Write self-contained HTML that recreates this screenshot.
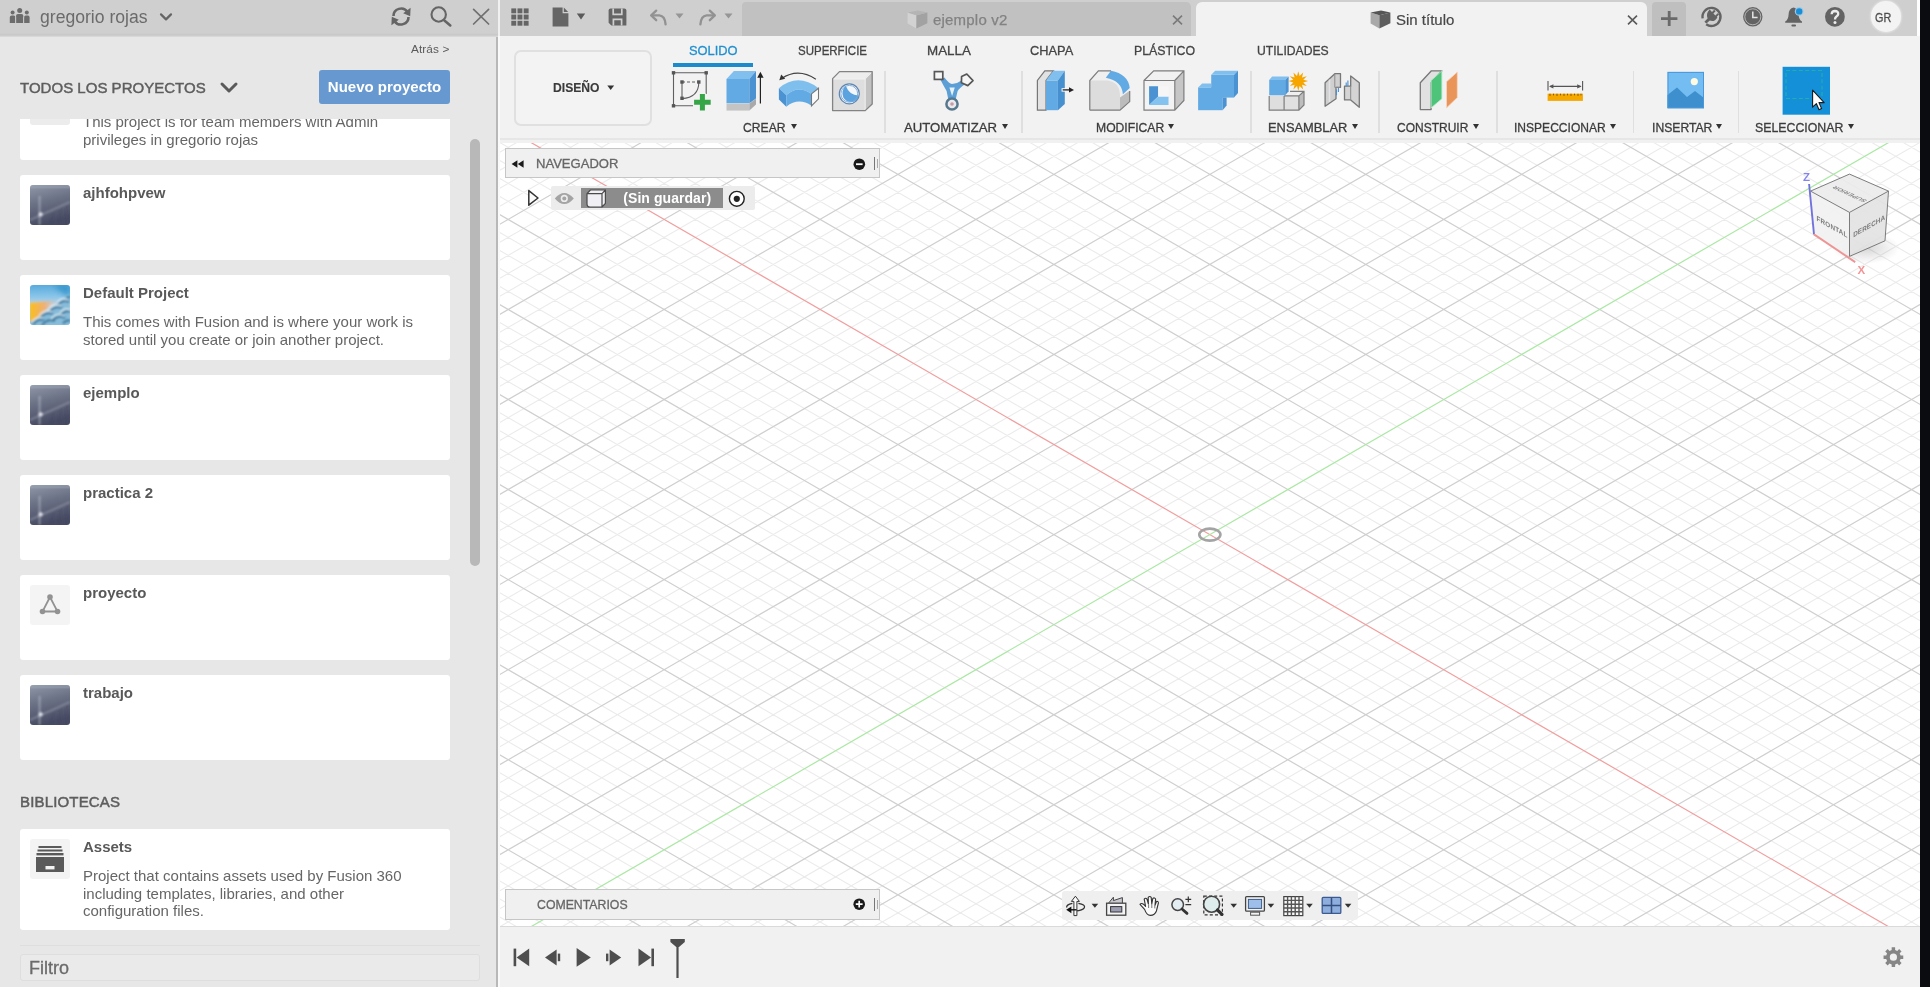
<!DOCTYPE html>
<html lang="es">
<head>
<meta charset="utf-8">
<title>Autodesk Fusion</title>
<style>
*{box-sizing:border-box;margin:0;padding:0}
html,body{width:1930px;height:987px;overflow:hidden;background:#fafafa;font-family:"Liberation Sans",sans-serif;color:#555}
.abs{position:absolute}
#left{will-change:transform;position:absolute;left:0;top:0;width:497.5px;height:987px;background:#e7e7e7;overflow:hidden}
#lhead{position:absolute;left:0;top:0;width:497.5px;height:37px;background:#cfcfcf}
#lsplit{position:absolute;left:496.2px;top:37px;width:1.5px;height:950px;background:#b8b8b8}
#lsplit2{position:absolute;left:497.5px;top:0;width:2.5px;height:36px;background:#f0f0f0}
.card{position:absolute;left:20px;width:430px;background:#fff;border-radius:3px}
.card .th{position:absolute;left:10px;top:10px;width:40px;height:40px;border-radius:3px;overflow:hidden}
.card .tt{position:absolute;left:63px;top:9px;font-size:15px;font-weight:bold;color:#595959;white-space:nowrap;line-height:18px}
.card .ds{position:absolute;left:63px;top:38px;font-size:15px;color:#666;line-height:17.6px;white-space:nowrap}
#main{will-change:transform;position:absolute;left:500px;top:0;width:1420px;height:987px;background:#fdfdfd}
#topbar{position:absolute;left:0;top:0;width:1417px;height:36.4px;background:#cfcfcf}
#toolbar{position:absolute;left:0;top:36px;width:1419.7px;height:103px;background:#f2f2f2}
#viewport{position:absolute;left:0;top:139px;width:1419.7px;height:787.6px;background:#fff;overflow:hidden}
#timeline{position:absolute;left:0;top:926.4px;width:1419.7px;height:61px;background:#f1f1f1;border-top:1.2px solid #dadada}
#black{position:absolute;left:1920px;top:0;width:10px;height:987px;background:#0b0c10}
.tab{position:absolute;top:9px;font-size:13px;color:#444;white-space:nowrap;line-height:15px}
.glab{position:absolute;top:84px;font-size:13px;color:#3c3c3c;white-space:nowrap;line-height:15px}
.garr{position:absolute;top:88px;width:0;height:0;border-left:3.5px solid transparent;border-right:3.5px solid transparent;border-top:5px solid #333}
.sep{position:absolute;top:35px;width:1.6px;height:62px;background:#dfdfdf}
.ico{position:absolute;overflow:visible}
</style>
</head>
<body>
<svg width="0" height="0" style="position:absolute">
<defs>
<linearGradient id="gDark" x1="0" y1="0" x2="0.25" y2="1"><stop offset="0" stop-color="#8f98a8"/><stop offset="0.45" stop-color="#6d7387"/><stop offset="1" stop-color="#474b63"/></linearGradient>
<linearGradient id="gSky" x1="0" y1="0" x2="0" y2="1"><stop offset="0" stop-color="#58abdc"/><stop offset="0.3" stop-color="#8cc6ea"/><stop offset="0.5" stop-color="#c9d3da"/><stop offset="1" stop-color="#8fc4e0"/></linearGradient>
<linearGradient id="gOr" x1="0" y1="0" x2="1" y2="0"><stop offset="0" stop-color="#fdbf18"/><stop offset="0.55" stop-color="#f9a85a" stop-opacity="0.8"/><stop offset="1" stop-color="#f0b090" stop-opacity="0"/></linearGradient>
<symbol id="thDark" viewBox="0 0 40 40">
<rect width="40" height="40" fill="url(#gDark)"/>
<rect width="40" height="3.4" fill="#aab2c0" opacity=".3"/>
<g filter="url(#bl)">
<path d="M9.6 11V40" stroke="#d4d9e4" stroke-width="1.6" opacity=".5"/>
<path d="M0 35L40 17" stroke="#b8bdcc" stroke-width="1.6" opacity=".45"/>
<circle cx="10.6" cy="29.4" r="2.1" fill="#eef1f7" opacity=".9"/>
<path d="M21 40L23 26M29 40L31 22M36 40L37 19" stroke="#3a3e58" stroke-width="1.2" opacity=".4"/>
</g>
</symbol>
<symbol id="thDef" viewBox="0 0 40 40">
<rect width="40" height="40" fill="url(#gSky)"/>
<path d="M24 0H40V12Q30 8 24 0Z" fill="#1683bd" opacity=".55" filter="url(#bl2)"/>
<g filter="url(#bl)">
<path d="M0 18L26 15.6L9 32L0 37Z" fill="url(#gOr)"/>
<path d="M0 38L10 31.6L20 24.6L30 15.6L36 11L40 10V40H0Z" fill="#86bcd9"/>
<path d="M3 39.4Q8 33 14 35M12 40Q18 33 25 36M10 33Q16 26 23 29M22 36Q28 29 35 33M19 27Q25 20 32 23M31 30Q36 24 40 27M28 20Q33 13.6 39 17M33 38.6Q37 34 40 36M36 13.6Q38.6 11.6 40 12.6" stroke="#2a6a92" stroke-width="2.3" fill="none" opacity=".85"/>
<path d="M2 37.4Q7 31 13 33M9 31Q15 24 22 27M21 34Q27 27 34 31M18 25Q24 18 31 21M30 28Q35 22 40 25M27 18Q32 11.6 38 15" stroke="#e6f3fb" stroke-width="1.5" fill="none" opacity=".9"/>
</g>
</symbol>
<filter id="bl2" x="-30%" y="-30%" width="160%" height="160%"><feGaussianBlur stdDeviation="2.5"/></filter>
<filter id="bl" x="-10%" y="-10%" width="120%" height="120%"><feGaussianBlur stdDeviation=".8"/></filter>
</defs>
</svg>
<div id="left">
 <div id="lhead" style="background:linear-gradient(#cfcfcf 0,#cfcfcf 33px,#c8c8c8 35px,#d6d6d6 36.4px,#e4e4e4 37px)"></div>
 <!-- people icon -->
 <svg class="ico" style="left:9px;top:7px" width="22" height="17" viewBox="0 0 22 17">
  <g fill="#6c6c6c"><circle cx="3.6" cy="5.6" r="2"/><path d="M.8 16V10.4Q.8 8.6 2.6 8.6H4.8Q6.4 8.6 6.4 10.4V16Z"/>
  <circle cx="17.8" cy="5.6" r="2"/><path d="M15 16V10.4Q15 8.6 16.8 8.6H19Q20.6 8.6 20.6 10.4V16Z"/>
  <circle cx="10.7" cy="3.4" r="2.5"/><path d="M7 16V9Q7 7 9 7H12.4Q14.4 7 14.4 9V16Z"/></g>
  <path d="M6.7 16V9.5M14.7 16V9.5" stroke="#cfcfcf" stroke-width=".9"/>
 </svg>
 <div class="abs" style="left:40px;top:6.5px;font-size:17.6px;line-height:20px;color:#6b6b6b;white-space:nowrap">gregorio rojas</div>
 <svg class="ico" style="left:159px;top:12px" width="14" height="10" viewBox="0 0 14 10"><path d="M2 2.4L7 7.4L12 2.4" fill="none" stroke="#656565" stroke-width="2.2" stroke-linecap="round" stroke-linejoin="round"/></svg>
 <!-- refresh -->
 <svg class="ico" style="left:390px;top:6px" width="22" height="21" viewBox="0 0 22 21">
  <g fill="none" stroke="#656565" stroke-width="2.6"><path d="M3.5 10A7.6 7.4 0 0 1 17.4 5.8"/><path d="M18.5 11A7.6 7.4 0 0 1 4.6 15.2"/></g>
  <path d="M20.6 1.8L20.2 10.2L13.2 7.2Z" fill="#656565"/><path d="M1.4 19.2L1.8 10.8L8.8 13.8Z" fill="#656565"/>
 </svg>
 <!-- search -->
 <svg class="ico" style="left:429px;top:5px" width="24" height="23" viewBox="0 0 24 23"><circle cx="9.7" cy="9.5" r="7.2" fill="none" stroke="#656565" stroke-width="2.1"/><path d="M15.4 15.6L21.3 20.4" stroke="#656565" stroke-width="2.6" stroke-linecap="round"/></svg>
 <!-- close -->
 <svg class="ico" style="left:472px;top:8px" width="18" height="18" viewBox="0 0 18 18"><path d="M1.6 1.4L16.6 16M16.6 1.4L1.6 16" stroke="#707070" stroke-width="1.7" stroke-linecap="round"/></svg>

 <div class="abs" style="left:411px;top:42px;font-size:11.8px;line-height:14px;color:#5a5a5a;white-space:nowrap;letter-spacing:.1px">Atrás &gt;</div>
 <div class="abs" style="left:20px;top:78.8px;font-size:15px;line-height:18px;color:#5e5e5e;-webkit-text-stroke:.45px #5e5e5e;letter-spacing:.02px;white-space:nowrap">TODOS LOS PROYECTOS</div>
 <svg class="ico" style="left:219px;top:81px" width="20" height="14" viewBox="0 0 20 14"><path d="M3 3L10 10L17 3" fill="none" stroke="#5a5a5a" stroke-width="3" stroke-linecap="round" stroke-linejoin="round"/></svg>
 <div class="abs" style="left:319px;top:69.7px;width:131px;height:34.6px;border-radius:3px;background:#6798cf;color:#fff;font-size:15px;font-weight:bold;text-align:center;line-height:34px;white-space:nowrap">Nuevo proyecto</div>

 <!-- clipped list area -->
 <div class="abs" style="left:0;top:119px;width:496px;height:660px;overflow:hidden">
  <div class="card" style="top:-44px;height:85px"><div class="th" style="background:#ececec"></div><div class="ds">This project is for team members with Admin<br>privileges in gregorio rojas</div></div>
  <div class="card" style="top:56px;height:85px"><svg class="th" viewBox="0 0 40 40"><use href="#thDark"/></svg><div class="tt">ajhfohpvew</div></div>
  <div class="card" style="top:156px;height:85px"><svg class="th" viewBox="0 0 40 40"><use href="#thDef"/></svg><div class="tt">Default Project</div><div class="ds">This comes with Fusion and is where your work is<br>stored until you create or join another project.</div></div>
  <div class="card" style="top:256px;height:85px"><svg class="th" viewBox="0 0 40 40"><use href="#thDark"/></svg><div class="tt">ejemplo</div></div>
  <div class="card" style="top:356px;height:85px"><svg class="th" viewBox="0 0 40 40"><use href="#thDark"/></svg><div class="tt">practica 2</div></div>
  <div class="card" style="top:456px;height:85px"><div class="th" style="background:#f4f4f4"><svg width="40" height="40" viewBox="0 0 40 40"><path d="M20 12L12.5 26.5H27.5Z" fill="none" stroke="#929292" stroke-width="1.8"/><circle cx="20" cy="12" r="2.8" fill="#929292"/><circle cx="12.5" cy="26.5" r="2.8" fill="#929292"/><circle cx="27.5" cy="26.5" r="2.8" fill="#929292"/></svg></div><div class="tt">proyecto</div></div>
  <div class="card" style="top:556px;height:85px"><svg class="th" viewBox="0 0 40 40"><use href="#thDark"/></svg><div class="tt">trabajo</div></div>
 </div>
 <!-- scrollbar -->
 <div class="abs" style="left:470px;top:139px;width:10px;height:427px;border-radius:5px;background:#b8b8b8"></div>

 <div class="abs" style="left:20px;top:793px;font-size:15px;line-height:18px;color:#5e5e5e;-webkit-text-stroke:.5px #5e5e5e;letter-spacing:.16px;white-space:nowrap">BIBLIOTECAS</div>
 <div class="card" style="top:829px;height:101px">
  <div class="th" style="background:#f3f3f3"><svg width="40" height="40" viewBox="0 0 40 40"><g fill="#5a5a5a"><rect x="8.5" y="7" width="23" height="2"/><rect x="7.5" y="10.5" width="25" height="2"/><rect x="6.5" y="14" width="27" height="2.4"/><path d="M6 18H34V33H6Z"/></g><rect x="15.5" y="27" width="9" height="3.4" fill="#f3f3f3"/></svg></div>
  <div class="tt">Assets</div>
  <div class="ds">Project that contains assets used by Fusion 360<br>including templates, libraries, and other<br>configuration files.</div>
 </div>
 <div class="abs" style="left:20px;top:945px;width:460px;height:1px;background:#dedede"></div>
 <div class="abs" style="left:20px;top:954px;width:460px;height:27px;border:1px solid #dedede;border-radius:3px;background:#eaeaea"></div>
 <div class="abs" style="left:29px;top:957.8px;font-size:18px;line-height:21px;color:#6a6a6a;-webkit-text-stroke:.3px #6a6a6a;white-space:nowrap">Filtro</div>
</div>
<div id="lsplit"></div><div id="lsplit2"></div>
<div id="main">
<div id="topbar">
 <!-- grid 3x3 -->
 <svg class="ico" style="left:11px;top:8px" width="18" height="18" viewBox="0 0 18 18"><g fill="#656565"><rect x=".3" y=".4" width="4.9" height="4.9"/><rect x="6.5" y=".4" width="4.9" height="4.9"/><rect x="12.7" y=".4" width="4.9" height="4.9"/><rect x=".3" y="6.6" width="4.9" height="4.9"/><rect x="6.5" y="6.6" width="4.9" height="4.9"/><rect x="12.7" y="6.6" width="4.9" height="4.9"/><rect x=".3" y="12.8" width="4.9" height="4.9"/><rect x="6.5" y="12.8" width="4.9" height="4.9"/><rect x="12.7" y="12.8" width="4.9" height="4.9"/></g></svg>
 <!-- file -->
 <svg class="ico" style="left:52px;top:7px" width="17" height="20" viewBox="0 0 17 20"><path d="M.6.4H10.6V6.2H16.4V19.6H.6Z" fill="#656565"/><path d="M11.8.6L16.2 5H11.8Z" fill="#656565"/></svg>
 <svg class="ico" style="left:76px;top:13px" width="10" height="7" viewBox="0 0 10 7"><path d="M.8.6H9.2L5 6.4Z" fill="#5a5a5a"/></svg>
 <!-- save -->
 <svg class="ico" style="left:108px;top:8px" width="19" height="18" viewBox="0 0 19 18"><path d="M2.6.4H16.4Q18.4.4 18.4 2.4V17.6H3.4L.6 14.8V2.4Q.6.4 2.6.4Z" fill="#656565"/><path d="M5.2.4V6.4H13.8V.4" fill="none" stroke="#cfcfcf" stroke-width="1.7"/><rect x="9.6" y="1.2" width="2.6" height="3.6" fill="#656565"/><path d="M5.4 17.6V11.4H13.6V17.6" fill="none" stroke="#cfcfcf" stroke-width="1.7"/></svg>
 <!-- undo -->
 <svg class="ico" style="left:149px;top:9px" width="19" height="17" viewBox="0 0 19 17"><path d="M7.2 1.6L2.2 6.4L7.2 11.2" fill="none" stroke="#929292" stroke-width="2.3" stroke-linecap="round" stroke-linejoin="round"/><path d="M2.8 6.4H10.4Q16 7 16.6 15.4" fill="none" stroke="#929292" stroke-width="2.3" stroke-linecap="round"/></svg>
 <svg class="ico" style="left:175px;top:13px" width="9" height="6" viewBox="0 0 9 6"><path d="M.5.4H8.5L4.5 5.6Z" fill="#969696"/></svg>
 <!-- redo -->
 <svg class="ico" style="left:198px;top:9px" width="19" height="17" viewBox="0 0 19 17"><path d="M11.8 1.6L16.8 6.4L11.8 11.2" fill="none" stroke="#929292" stroke-width="2.3" stroke-linecap="round" stroke-linejoin="round"/><path d="M16.2 6.4H8.6Q3 7 2.4 15.4" fill="none" stroke="#929292" stroke-width="2.3" stroke-linecap="round"/></svg>
 <svg class="ico" style="left:224px;top:13px" width="9" height="6" viewBox="0 0 9 6"><path d="M.5.4H8.5L4.5 5.6Z" fill="#969696"/></svg>

 <!-- tab 1 -->
 <div class="abs" style="left:242px;top:2px;width:449px;height:34px;background:#c1c1c1;border-radius:4px 5px 0 0"></div>
 <svg class="ico" style="left:407px;top:10px" width="21" height="19" viewBox="0 0 21 19"><path d="M.6 2.6L9.4 5.2V18.4L.6 13.6Z" fill="#d2d2d2"/><path d="M9.4 5.2L20.4 2.4V13.2L9.4 18.4Z" fill="#a2a2a2"/><path d="M.6 2.6L11 .5L20.4 2.4L9.4 5.2Z" fill="#b4b4b4"/></svg>
 <div class="abs" style="left:433px;top:11.4px;font-size:15px;line-height:18px;color:#828282;-webkit-text-stroke:.25px #828282;white-space:nowrap;letter-spacing:.2px">ejemplo v2</div>
 <svg class="ico" style="left:672px;top:15px" width="11" height="10" viewBox="0 0 11 10"><path d="M1 .6L10 9.4M10 .6L1 9.4" stroke="#7a7a7a" stroke-width="1.6"/></svg>
 <!-- tab 2 active -->
 <div class="abs" style="left:696px;top:2px;width:451px;height:35px;background:#f2f2f2;border-radius:6px 6px 0 0"></div>
 <svg class="ico" style="left:870px;top:10px" width="21" height="19" viewBox="0 0 21 19"><path d="M.6 2.6L9.4 5.2V18.4L.6 13.6Z" fill="#a9a9a9"/><path d="M9.4 5.2L20.4 2.4V13.2L9.4 18.4Z" fill="#5e5e5e"/><path d="M.6 2.6L11 .5L20.4 2.4L9.4 5.2Z" fill="#555"/></svg>
 <div class="abs" style="left:896px;top:11.4px;font-size:15px;line-height:18px;color:#484848;-webkit-text-stroke:.2px #484848;white-space:nowrap">Sin título</div>
 <svg class="ico" style="left:1127px;top:15px" width="11" height="10" viewBox="0 0 11 10"><path d="M1 .6L10 9.4M10 .6L1 9.4" stroke="#5a5a5a" stroke-width="1.6"/></svg>
 <!-- plus -->
 <div class="abs" style="left:1151.5px;top:2px;width:34.5px;height:34px;background:#bfbfbf;border-radius:4px 4px 0 0"></div>
 <svg class="ico" style="left:1160px;top:10px" width="18" height="17" viewBox="0 0 18 17"><path d="M9.2 1V16M1 8.6H17.4" stroke="#6a6a6a" stroke-width="2.8"/></svg>
 <!-- extensions -->
 <svg class="ico" style="left:1200px;top:5.2px" width="22" height="22" viewBox="0 0 22 22"><path d="M6.2 19.2A9 9 0 1 0 2.6 13.4" fill="none" stroke="#636363" stroke-width="2.4"/><path d="M9.6 4.6L12 7L14.2 4.8L15.6 6.2L13.4 8.4L15.4 10.4L17.6 8.2L19 9.6L16.8 11.8L17.4 12.4Q14.6 17.2 9.8 15.6L6.4 18.6L4.4 16.8L7.6 13.6Q5.6 9 9.6 4.6Z" fill="#636363"/></svg>
 <!-- clock -->
 <svg class="ico" style="left:1242px;top:6px" width="22" height="22" viewBox="0 0 22 22"><circle cx="10.8" cy="10.8" r="9.7" fill="#636363"/><circle cx="10.8" cy="10.8" r="8" fill="none" stroke="#bdbdbd" stroke-width=".9"/><path d="M10.8 5.4V11.4H15.6" fill="none" stroke="#e4e4e4" stroke-width="1.5"/></svg>
 <!-- bell -->
 <svg class="ico" style="left:1284px;top:5px" width="22" height="23" viewBox="0 0 22 23"><path d="M9.6 2.4Q14.4 3.4 14.6 9.4Q14.8 14.4 18 16.6V17.8H1.2V16.6Q4.4 14.4 4.6 9.4Q4.8 3.4 9.6 2.4Z" fill="#636363"/><rect x="7.4" y="19.6" width="4.6" height="1.8" rx=".9" fill="#636363"/><circle cx="15.2" cy="6.4" r="4.4" fill="#9cc9e6"/><circle cx="15.2" cy="6.4" r="3.2" fill="#1b8fd6"/></svg>
 <!-- help -->
 <svg class="ico" style="left:1324px;top:6px" width="22" height="22" viewBox="0 0 22 22"><circle cx="10.9" cy="10.8" r="9.9" fill="#636363"/><path d="M7.6 8.2Q7.8 5 11 5Q14.4 5.2 14.2 8Q14 9.8 12.2 10.8Q11 11.6 11 13.4" fill="none" stroke="#ececec" stroke-width="2.3"/><circle cx="11" cy="16.6" r="1.5" fill="#ececec"/></svg>
 <!-- avatar -->
 <div class="abs" style="left:1371px;top:1.3px;width:30.4px;height:30.4px;border-radius:50%;background:#f3f3f3;box-shadow:0 0 2px 1px rgba(240,240,240,.55)"></div>
 <span class="abs" style="left:1375.3px;top:10.1px;font-size:13px;line-height:15px;font-weight:400;color:#4c4c4c;white-space:nowrap;-webkit-text-stroke:.3px #4c4c4c;transform-origin:0 0;transform:scaleX(0.8308)">GR</span>
</div>
<div id="toolbar">
 <div class="abs" style="left:0;top:101.8px;width:1420px;height:1.2px;background:#e6e6e6"></div>
 
 <!-- DISEÑO button -->
 <div class="abs" style="left:13.9px;top:13.8px;width:138px;height:76px;border:2px solid #e0e0e0;border-radius:7px;background:#f3f3f3"></div>
 <span class="abs" style="left:53.2px;top:44.2px;font-size:13px;line-height:15px;font-weight:700;color:#3a3a3a;white-space:nowrap;-webkit-text-stroke:.15px #3a3a3a;transform-origin:0 0;transform:scaleX(0.9329)">DISEÑO</span>
 <svg class="ico" style="left:106.5px;top:48.8px" width="8" height="6" viewBox="0 0 8 6"><path d="M.3.4H7.1L3.7 5Z" fill="#333"/></svg>
 <!-- tabs -->
 <span class="abs" style="left:189px;top:7.3px;font-size:13px;line-height:15px;font-weight:400;color:#1f8fd0;white-space:nowrap;-webkit-text-stroke:.3px #1f8fd0;transform-origin:0 0;transform:scaleX(0.9893)">SOLIDO</span>
 <span class="abs" style="left:297.8px;top:7.3px;font-size:13px;line-height:15px;font-weight:400;color:#444;white-space:nowrap;-webkit-text-stroke:.3px #444;transform-origin:0 0;transform:scaleX(0.8845)">SUPERFICIE</span>
 <span class="abs" style="left:426.6px;top:7.3px;font-size:13px;line-height:15px;font-weight:400;color:#444;white-space:nowrap;-webkit-text-stroke:.3px #444;transform-origin:0 0;transform:scaleX(1.0298)">MALLA</span>
 <span class="abs" style="left:530.3px;top:7.3px;font-size:13px;line-height:15px;font-weight:400;color:#444;white-space:nowrap;-webkit-text-stroke:.3px #444;transform-origin:0 0;transform:scaleX(0.9857)">CHAPA</span>
 <span class="abs" style="left:634.2px;top:7.3px;font-size:13px;line-height:15px;font-weight:400;color:#444;white-space:nowrap;-webkit-text-stroke:.3px #444;transform-origin:0 0;transform:scaleX(0.9503)">PLÁSTICO</span>
 <span class="abs" style="left:756.6px;top:7.3px;font-size:13px;line-height:15px;font-weight:400;color:#444;white-space:nowrap;-webkit-text-stroke:.3px #444;transform-origin:0 0;transform:scaleX(0.9364)">UTILIDADES</span>
 <div class="abs" style="left:172.7px;top:27.2px;width:80.2px;height:4px;background:#1b8bcb"></div>
 <!-- group labels -->
 <span class="abs" style="left:243.3px;top:83.5px;font-size:13px;line-height:15px;font-weight:400;color:#3c3c3c;white-space:nowrap;-webkit-text-stroke:.3px #3c3c3c;transform-origin:0 0;transform:scaleX(0.9339)">CREAR</span><div class="garr" style="left:290.5px"></div>
 <span class="abs" style="left:403.9px;top:83.5px;font-size:13px;line-height:15px;font-weight:400;color:#3c3c3c;white-space:nowrap;-webkit-text-stroke:.3px #3c3c3c;transform-origin:0 0;transform:scaleX(1.0123)">AUTOMATIZAR</span><div class="garr" style="left:502.3px"></div>
 <span class="abs" style="left:595.6px;top:83.5px;font-size:13px;line-height:15px;font-weight:400;color:#3c3c3c;white-space:nowrap;-webkit-text-stroke:.3px #3c3c3c;transform-origin:0 0;transform:scaleX(0.9350)">MODIFICAR</span><div class="garr" style="left:668px"></div>
 <span class="abs" style="left:767.9px;top:83.5px;font-size:13px;line-height:15px;font-weight:400;color:#3c3c3c;white-space:nowrap;-webkit-text-stroke:.3px #3c3c3c;transform-origin:0 0;transform:scaleX(0.9901)">ENSAMBLAR</span><div class="garr" style="left:851.6px"></div>
 <span class="abs" style="left:897px;top:83.5px;font-size:13px;line-height:15px;font-weight:400;color:#3c3c3c;white-space:nowrap;-webkit-text-stroke:.3px #3c3c3c;transform-origin:0 0;transform:scaleX(0.9227)">CONSTRUIR</span><div class="garr" style="left:972.6px"></div>
 <span class="abs" style="left:1014.4px;top:83.5px;font-size:13px;line-height:15px;font-weight:400;color:#3c3c3c;white-space:nowrap;-webkit-text-stroke:.3px #3c3c3c;transform-origin:0 0;transform:scaleX(0.9266)">INSPECCIONAR</span><div class="garr" style="left:1110.2px"></div>
 <span class="abs" style="left:1151.6px;top:83.5px;font-size:13px;line-height:15px;font-weight:400;color:#3c3c3c;white-space:nowrap;-webkit-text-stroke:.3px #3c3c3c;transform-origin:0 0;transform:scaleX(0.9360)">INSERTAR</span><div class="garr" style="left:1216.2px"></div>
 <span class="abs" style="left:1255.3px;top:83.5px;font-size:13px;line-height:15px;font-weight:400;color:#3c3c3c;white-space:nowrap;-webkit-text-stroke:.3px #3c3c3c;transform-origin:0 0;transform:scaleX(0.9486)">SELECCIONAR</span><div class="garr" style="left:1347.8px"></div>
 <!-- separators -->
 <div class="sep" style="left:384px"></div><div class="sep" style="left:521px"></div><div class="sep" style="left:750px"></div><div class="sep" style="left:878px"></div><div class="sep" style="left:996px"></div><div class="sep" style="left:1132.5px"></div><div class="sep" style="left:1237.5px"></div>
 <svg class="abs" style="left:0;top:0" width="1420" height="103" viewBox="0 0 1420 103">
<!-- sketch -->
<g stroke="#5f5f5f" stroke-width="1.1" fill="none">
<path d="M173.5 36.8H206M173.5 36.8V69.8M206.2 36.8V58M173.5 69.8H193"/>
<path d="M182 46V61.8" /><path d="M182 46H198.8" stroke-dasharray="3 2"/><path d="M198.8 46Q198.8 61.6 182 62.6"/>
</g>
<g fill="#555"><rect x="171.8" y="35.1" width="3.4" height="3.4"/><rect x="204.5" y="35.1" width="3.4" height="3.4"/><rect x="171.8" y="68.1" width="3.4" height="3.4"/><rect x="180.3" y="44.3" width="3.4" height="3.4"/><rect x="197.1" y="44.3" width="3.4" height="3.4"/><rect x="180.3" y="60.6" width="3.4" height="3.4"/></g>
<path d="M202.4 57.5V74.5M193.9 66H210.9" stroke="#f2f2f2" stroke-width="7.4"/>
<path d="M202.4 58V74.4M194.1 66.2H210.7" stroke="#35a547" stroke-width="5"/>
<!-- extrude -->
<path d="M226.5 67.6H249.4V74.6H226.5Z" fill="#c4c4c4"/><path d="M249.4 67.6L256 62.8V68.5L249.4 74.6Z" fill="#a9a9a9"/>
<path d="M226.5 42.9H249.4V67.2H226.5Z" fill="#62aae3"/><path d="M226.5 42.9L233.9 35H256L249.4 42.9Z" fill="#80bfee"/><path d="M249.4 42.9L256 35V62.4L249.4 67.2Z" fill="#4a92d1"/>
<path d="M260.4 40V67.4" stroke="#222" stroke-width="1.2"/><path d="M257.2 41.8H263.6L260.4 35.8Z" fill="#222"/>
<!-- revolve -->
<path d="M315.9 43.2Q298 31.5 281.6 42.6" fill="none" stroke="#444" stroke-width="1.2"/><path d="M279.3 44.2L281.2 38.6L285.2 42.8Z" fill="#333"/>
<path d="M278.9 52.2Q297.8 36.5 318.5 52.2L311.5 57.9Q297.8 48.5 286.3 59.2Z" fill="#7fbfee"/>
<path d="M278.9 52.2L286.3 59.2V70.7L278.9 63.6Z" fill="#4a92d1"/>
<path d="M286.3 59.2Q297.8 48.5 311.5 57.9V69.8Q298.7 61 286.3 70.7Z" fill="#62aae3"/>
<path d="M311.5 57.9L318.5 52.2V62.8L311.5 69.8Z" fill="#fafafa" stroke="#777" stroke-width="1.1"/>
<!-- hole -->
<path d="M332.6 42.6H365.2V74.6H332.6Z" fill="#dedede"/><path d="M332.6 42.6L339.5 35.6H372.2L365.2 42.6Z" fill="#ededed"/><path d="M365.2 42.6L372.2 35.6V68L365.2 74.6Z" fill="#c2c2c2"/>
<path d="M333.4 43H365.2V74M365.2 43L371.6 36.4" fill="none" stroke="#f4f4f4" stroke-width="1" opacity=".9"/>
<path d="M332.6 42.6L339.5 35.6H372.2V68L365.2 74.6H332.6Z" fill="none" stroke="#838383" stroke-width="1.3" stroke-linejoin="round"/>
<circle cx="349.3" cy="57.8" r="10" fill="#f4f7fa" stroke="#5f86b0" stroke-width="1.2"/>
<path d="M345.6 49.6Q340.6 55 343.4 61.8Q347 67 353.6 65.8Q358.6 64 358.4 59.6Q349.5 59.5 345.6 49.6Z" fill="#5aa3df"/>
<circle cx="349.3" cy="57.8" r="8.4" fill="none" stroke="#7aa7d6" stroke-width=".9"/>
<!-- automate -->
<path d="M440.4 43.8L444.4 41.4Q449 47.4 452 48Q457 47.8 461.4 44.4L464.6 48.6Q459.4 52.4 457.6 55L455.8 63H448.2L446.6 55Q444 50.6 440.4 43.8Z" fill="#5b9fd6"/>
<path d="M449.4 51.6H454.8L452.1 60Z" fill="#e4f2fc"/>
<rect x="434.4" y="35.6" width="8.4" height="7.8" fill="#f6f6f6" stroke="#575757" stroke-width="1.7"/>
<path d="M466.8 38L473 44.6L467.8 49.6L461.4 46.8L461.6 40.6Z" fill="#f6f6f6" stroke="#575757" stroke-width="1.7" stroke-linejoin="round"/>
<circle cx="452" cy="68" r="5.6" fill="#e9e9ee" stroke="#56788f" stroke-width="2.5"/><circle cx="452" cy="68" r="1.8" fill="#c898a4"/>
<!-- press pull -->
<path d="M537.4 74.2V44.5L544.8 34.8H553.4L546 44.5V74.2Z" fill="#e2e2e2" stroke="#777" stroke-width="1.2"/>
<path d="M546 44.5H557.9V74.2H546Z" fill="#62aae3"/><path d="M546 44.5L553.4 34.8H564.8L557.9 44.5Z" fill="#80bfee"/><path d="M557.9 44.5L564.8 34.8V67.9L557.9 74.2Z" fill="#4690d0"/>
<rect x="561.6" y="52.2" width="4" height="3.4" fill="#fff"/><path d="M562.6 53.9H570" stroke="#222" stroke-width="1.3"/><path d="M569 51.2L574 53.9L569 56.6Z" fill="#222"/>
<!-- fillet -->
<path d="M589.8 44.5L598.4 34.8H611Q628 38 629.7 53V65.6L620 74.2H589.8Z" fill="#efefef"/>
<path d="M589.8 74.2V44.5H608Q619 46 620 58.2V74.2Z" fill="#dddddd"/>
<path d="M620 61.6L629.7 54.8V65.6L620 74.2Z" fill="#bcbcbc"/>
<path d="M605.8 41.7L611 34.8Q628 38 629.7 51.9L622.9 58.2Q622 45 605.8 41.7Z" fill="#62aae3"/>
<path d="M589.8 74.2V44.5L598.4 34.8H611M589.8 74.2H620L629.7 65.6V55" fill="none" stroke="#7d7d7d" stroke-width="1.2"/>
<!-- shell -->
<path d="M644 44.5L653.7 34.8H683.9L674.8 44.5Z" fill="#f1f1f1"/><path d="M674.8 44.5L683.9 34.8V64.5L674.8 74.2Z" fill="#c6c6c6"/><path d="M644 44.5H674.8V74.2H644Z" fill="#f3f3f3"/>
<path d="M649.1 50.2H658.2V60.5L649.1 69Z" fill="#4a92d1"/><path d="M658.2 60.5H668.5V69H649.1Z" fill="#84c2f0"/><path d="M658.2 50.2H668.5V60.5H658.2Z" fill="#f6f6f6"/>
<path d="M644 44.5L653.7 34.8H683.9V64.5L674.8 74.2H644ZM644 44.5H674.8V74.2M674.8 44.5L683.9 34.8" fill="none" stroke="#7d7d7d" stroke-width="1.2"/>
<!-- combine -->
<path d="M698.1 51.4H722.6V74.2H698.1Z" fill="#62aae3"/><path d="M698.1 51.4L702.1 47.4H711.2V51.4Z" fill="#80bfee"/>
<path d="M711.2 38.8H734V61.6H711.2Z" fill="#62aae3"/><path d="M711.2 38.8L715.2 34.8H738L734 38.8Z" fill="#80bfee"/><path d="M734 38.8L738 34.8V57.1L734 61.6Z" fill="#4a92d1"/>
<path d="M722.6 61.6H726.6V69.6L722.6 74.2Z" fill="#4a92d1"/><path d="M711.2 51.4H722.6V61.6H711.2Z" fill="#62aae3"/>
<!-- new component -->
<path d="M769.2 59.9H784.1V74.2H769.2Z" fill="#dedede"/><path d="M784.1 59.9H798.9V74.2H784.1Z" fill="#e0e0e0"/><path d="M784.1 59.9L788.6 55.3H804L798.9 59.9Z" fill="#efefef"/><path d="M798.9 59.9L804 55.3V69L798.9 74.2Z" fill="#bdbdbd"/>
<path d="M769.2 59.9V74.2H798.9L804 69V55.3H790M784.1 59.9V74.2M784.1 59.9H798.9V74.2M798.9 59.9L804 55.3" fill="none" stroke="#7d7d7d" stroke-width="1.2"/>
<path d="M769.2 43.9H785.2V59.3H769.2Z" fill="#62aae3"/><path d="M769.2 43.9L772.1 40.5H788.6L785.2 43.9Z" fill="#80bfee"/><path d="M785.2 43.9L788.6 40.5V55.3L785.2 59.3Z" fill="#4a92d1"/>
<path d="M798.3 35.3L799.6 40.1L803.2 36.6L802.0 41.4L806.8 40.2L803.3 43.8L808.1 45.1L803.3 46.4L806.8 50.0L802.0 48.8L803.2 53.6L799.6 50.1L798.3 54.9L797.0 50.1L793.4 53.6L794.6 48.8L789.8 50.0L793.3 46.4L788.5 45.1L793.3 43.8L789.8 40.2L794.6 41.4L793.4 36.6L797.0 40.1Z" fill="#f7a600"/>
<!-- joint -->
<path d="M825.1 70.2V46.8L834.8 37.7H840.5V51.4H836V62.8Z" fill="#d0d0d0" stroke="#777" stroke-width="1.3" stroke-linejoin="round"/>
<path d="M834.8 37.7V51.4H840.5" fill="none" stroke="#8a8a8a" stroke-width="1"/><path d="M829.5 43.5V66" stroke="#e8e8e8" stroke-width="1.6" opacity=".8"/>
<path d="M850.7 40L859.3 46.8V71.3L850.7 63.9H844.5V50.2H850.7Z" fill="#d4d4d4" stroke="#777" stroke-width="1.3" stroke-linejoin="round"/>
<path d="M850.7 50.2V63.9" stroke="#8a8a8a" stroke-width="1"/>
<path d="M836.5 53.6V59.3M838.4 52V56M847.9 44.6V50M846.2 46.6V50.4" stroke="#4a8fce" stroke-width="1.1"/>
<!-- construct -->
<path d="M920.3 46.8L931.4 34.8H941.9L931.1 46.8V73.6H920.3Z" fill="#e1e1e1" stroke="#777" stroke-width="1.3" stroke-linejoin="round"/>
<path d="M931.1 44.5L941.9 34.8V62.8L931.1 71.9Z" fill="#4dc47a" stroke="#bfeccf" stroke-width=".8"/>
<path d="M946.5 45.7L957.3 36V61.6L946.5 71.9Z" fill="#e9955a" stroke="#f6d6c0" stroke-width=".8"/>
<!-- inspect -->
<rect x="1047.6" y="57.7" width="35.3" height="7.2" fill="#f5a800"/>
<path d="M1050 57.7V60M1053.5 57.7V59.4M1057 57.7V60M1060.5 57.7V59.4M1064 57.7V60M1067.5 57.7V59.4M1071 57.7V60M1074.5 57.7V59.4M1078 57.7V60M1081 57.7V59.4" stroke="#8a5a00" stroke-width="1"/>
<path d="M1048 45V54.6M1082.6 45V54.6M1050 50.4H1080.6" stroke="#555" stroke-width="1.1"/><path d="M1049 50.4L1053.4 48.2V52.6ZM1081.6 50.4L1077.2 48.2V52.6Z" fill="#555"/>
<!-- insert -->
<rect x="1167.5" y="35.9" width="36.5" height="36.3" fill="#73bdf2"/>
<path d="M1167.5 59L1177 51.5L1187 61L1195 55L1204 62V72.2H1167.5Z" fill="#3d8fcd"/>
<circle cx="1194.3" cy="45.6" r="3.6" fill="#fffbe2"/>
<rect x="1168" y="36.4" width="35.5" height="35.3" fill="none" stroke="#4a97dc" stroke-width="1"/>
<!-- select -->
<rect x="1282.6" y="30.8" width="47.4" height="47.9" fill="#1490d8"/>
<rect x="1286" y="34.5" width="36" height="28" fill="none" stroke="#27b3a6" stroke-width="1.1" stroke-dasharray="4 2.4" opacity=".85"/>
<path d="M1312.6 54.2V71.2L1316.4 67.6L1319 73.8L1321.6 72.6L1319 66.6H1324.2Z" fill="#fff" stroke="#1a1a1a" stroke-width="1.1" stroke-linejoin="round"/>

 </svg>
</div>
<div id="viewport">
<svg class="abs" style="left:0;top:0" width="1420" height="787" viewBox="0 0 1420 787"><path d="M-5.0 775.2L1425.0 1601.2M-5.0 757.2L1425.0 1583.2M-5.0 739.2L1425.0 1565.2M-5.0 721.2L1425.0 1547.2M-5.0 685.2L1425.0 1511.1M-5.0 667.2L1425.0 1493.1M-5.0 649.1L1425.0 1475.1M-5.0 631.1L1425.0 1457.1M-5.0 595.1L1425.0 1421.1M-5.0 577.1L1425.0 1403.1M-5.0 559.1L1425.0 1385.1M-5.0 541.1L1425.0 1367.0M-5.0 505.0L1425.0 1331.0M-5.0 487.0L1425.0 1313.0M-5.0 469.0L1425.0 1295.0M-5.0 451.0L1425.0 1277.0M-5.0 415.0L1425.0 1241.0M-5.0 397.0L1425.0 1222.9M-5.0 379.0L1425.0 1204.9M-5.0 361.0L1425.0 1186.9M-5.0 324.9L1425.0 1150.9M-5.0 306.9L1425.0 1132.9M-5.0 288.9L1425.0 1114.9M-5.0 270.9L1425.0 1096.9M-5.0 234.9L1425.0 1060.8M-5.0 216.9L1425.0 1042.8M-5.0 198.8L1425.0 1024.8M-5.0 180.8L1425.0 1006.8M-5.0 144.8L1425.0 970.8M-5.0 126.8L1425.0 952.8M-5.0 108.8L1425.0 934.8M-5.0 90.8L1425.0 916.7M-5.0 54.7L1425.0 880.7M-5.0 36.7L1425.0 862.7M-5.0 18.7L1425.0 844.7M-5.0 0.7L1425.0 826.7M-5.0 -35.3L1425.0 790.7M-5.0 -53.3L1425.0 772.6M-5.0 -71.3L1425.0 754.6M-5.0 -89.3L1425.0 736.6M-5.0 -125.4L1425.0 700.6M-5.0 -143.4L1425.0 682.6M-5.0 -161.4L1425.0 664.6M-5.0 -179.4L1425.0 646.6M-5.0 -215.4L1425.0 610.5M-5.0 -233.4L1425.0 592.5M-5.0 -251.5L1425.0 574.5M-5.0 -269.5L1425.0 556.5M-5.0 -305.5L1425.0 520.5M-5.0 -323.5L1425.0 502.5M-5.0 -341.5L1425.0 484.5M-5.0 -359.5L1425.0 466.4M-5.0 -395.6L1425.0 430.4M-5.0 -413.6L1425.0 412.4M-5.0 -431.6L1425.0 394.4M-5.0 -449.6L1425.0 376.4M-5.0 -485.6L1425.0 340.4M-5.0 -503.6L1425.0 322.3M-5.0 -521.6L1425.0 304.3M-5.0 -539.6L1425.0 286.3M-5.0 -575.7L1425.0 250.3M-5.0 -593.7L1425.0 232.3M-5.0 -611.7L1425.0 214.3M-5.0 -629.7L1425.0 196.3M-5.0 -665.7L1425.0 160.2M-5.0 -683.7L1425.0 142.2M-5.0 -701.8L1425.0 124.2M-5.0 -719.8L1425.0 106.2M-5.0 -755.8L1425.0 70.2M-5.0 -773.8L1425.0 52.2M-5.0 -791.8L1425.0 34.2M-5.0 -809.8L1425.0 16.1M-5.0 16.0L1425.0 -810.0M-5.0 34.0L1425.0 -792.0M-5.0 52.0L1425.0 -774.0M-5.0 70.0L1425.0 -756.0M-5.0 106.0L1425.0 -719.9M-5.0 124.0L1425.0 -701.9M-5.0 142.1L1425.0 -683.9M-5.0 160.1L1425.0 -665.9M-5.0 196.1L1425.0 -629.9M-5.0 214.1L1425.0 -611.9M-5.0 232.1L1425.0 -593.9M-5.0 250.1L1425.0 -575.8M-5.0 286.2L1425.0 -539.8M-5.0 304.2L1425.0 -521.8M-5.0 322.2L1425.0 -503.8M-5.0 340.2L1425.0 -485.8M-5.0 376.2L1425.0 -449.8M-5.0 394.2L1425.0 -431.7M-5.0 412.2L1425.0 -413.7M-5.0 430.2L1425.0 -395.7M-5.0 466.3L1425.0 -359.7M-5.0 484.3L1425.0 -341.7M-5.0 502.3L1425.0 -323.7M-5.0 520.3L1425.0 -305.7M-5.0 556.3L1425.0 -269.6M-5.0 574.3L1425.0 -251.6M-5.0 592.4L1425.0 -233.6M-5.0 610.4L1425.0 -215.6M-5.0 646.4L1425.0 -179.6M-5.0 664.4L1425.0 -161.6M-5.0 682.4L1425.0 -143.6M-5.0 700.4L1425.0 -125.5M-5.0 736.5L1425.0 -89.5M-5.0 754.5L1425.0 -71.5M-5.0 772.5L1425.0 -53.5M-5.0 790.5L1425.0 -35.5M-5.0 826.5L1425.0 0.5M-5.0 844.5L1425.0 18.6M-5.0 862.5L1425.0 36.6M-5.0 880.5L1425.0 54.6M-5.0 916.6L1425.0 90.6M-5.0 934.6L1425.0 108.6M-5.0 952.6L1425.0 126.6M-5.0 970.6L1425.0 144.6M-5.0 1006.6L1425.0 180.7M-5.0 1024.6L1425.0 198.7M-5.0 1042.7L1425.0 216.7M-5.0 1060.7L1425.0 234.7M-5.0 1096.7L1425.0 270.7M-5.0 1114.7L1425.0 288.7M-5.0 1132.7L1425.0 306.7M-5.0 1150.7L1425.0 324.8M-5.0 1186.8L1425.0 360.8M-5.0 1204.8L1425.0 378.8M-5.0 1222.8L1425.0 396.8M-5.0 1240.8L1425.0 414.8M-5.0 1276.8L1425.0 450.8M-5.0 1294.8L1425.0 468.9M-5.0 1312.8L1425.0 486.9M-5.0 1330.8L1425.0 504.9M-5.0 1366.9L1425.0 540.9M-5.0 1384.9L1425.0 558.9M-5.0 1402.9L1425.0 576.9M-5.0 1420.9L1425.0 594.9M-5.0 1456.9L1425.0 631.0M-5.0 1474.9L1425.0 649.0M-5.0 1493.0L1425.0 667.0M-5.0 1511.0L1425.0 685.0M-5.0 1547.0L1425.0 721.0M-5.0 1565.0L1425.0 739.0M-5.0 1583.0L1425.0 757.0M-5.0 1601.0L1425.0 775.1" stroke="#ebebeb" stroke-width="1.1" fill="none"/><path d="M-5.0 703.2L1425.0 1529.2M-5.0 613.1L1425.0 1439.1M-5.0 523.1L1425.0 1349.0M-5.0 433.0L1425.0 1259.0M-5.0 342.9L1425.0 1168.9M-5.0 252.9L1425.0 1078.9M-5.0 162.8L1425.0 988.8M-5.0 72.8L1425.0 898.7M-5.0 -107.4L1425.0 718.6M-5.0 -197.4L1425.0 628.6M-5.0 -287.5L1425.0 538.5M-5.0 -377.5L1425.0 448.4M-5.0 -467.6L1425.0 358.4M-5.0 -557.7L1425.0 268.3M-5.0 -647.7L1425.0 178.3M-5.0 -737.8L1425.0 88.2M-5.0 -827.8L1425.0 -1.9M-5.0 -2.0L1425.0 -828.0M-5.0 88.0L1425.0 -738.0M-5.0 178.1L1425.0 -647.9M-5.0 268.1L1425.0 -557.8M-5.0 358.2L1425.0 -467.8M-5.0 448.3L1425.0 -377.7M-5.0 538.3L1425.0 -287.7M-5.0 628.4L1425.0 -197.6M-5.0 718.4L1425.0 -107.5M-5.0 898.6L1425.0 72.6M-5.0 988.6L1425.0 162.6M-5.0 1078.7L1425.0 252.7M-5.0 1168.7L1425.0 342.8M-5.0 1258.8L1425.0 432.8M-5.0 1348.9L1425.0 522.9M-5.0 1438.9L1425.0 612.9M-5.0 1529.0L1425.0 703.0" stroke="#cfcfcf" stroke-width="1.2" fill="none"/><path d="M-5.0 -17.3L1425.0 808.7" stroke="#f19e9e" stroke-width="1.2" fill="none"/><path d="M-5.0 808.5L1425.0 -17.5" stroke="#aae8a3" stroke-width="1.2" fill="none"/><ellipse cx="709.85" cy="395.60" rx="10.6" ry="6" fill="none" stroke="#a4a4a4" stroke-width="2.6"/></svg>
 <div class="abs" style="left:0;top:0;width:1420px;height:1px;background:#e6e6e6"></div><div class="abs" style="left:0;top:1px;width:1420px;height:3.3px;background:#f1f1f1"></div>
 <!-- navegador -->
 <div class="abs" style="left:5px;top:8.7px;width:375px;height:30.8px;background:#f0f0f0;border:1px solid #c6c6c6"></div>
 <svg class="ico" style="left:11px;top:20px" width="14" height="10" viewBox="0 0 14 10"><path d="M.6 5L6.4 1.2V8.8ZM6.8 5L12.6 1.2V8.8Z" fill="#1a1a1a"/></svg>
 <span class="abs" style="left:36.4px;top:17.2px;font-size:13px;line-height:15px;font-weight:400;color:#666;white-space:nowrap;-webkit-text-stroke:.3px #666;transform-origin:0 0;transform:scaleX(1.0036)">NAVEGADOR</span>
 <svg class="ico" style="left:353px;top:18.5px" width="13" height="13" viewBox="0 0 13 13"><circle cx="6.3" cy="6.2" r="5.8" fill="#1a1a1a"/><rect x="3" y="5.3" width="6.6" height="1.8" fill="#fff"/></svg>
 <div class="abs" style="left:374px;top:18px;width:1.2px;height:13px;background:#777"></div><div class="abs" style="left:376.6px;top:20px;width:1px;height:9px;background:#aaa"></div>
 <!-- tree row -->
 <div class="abs" style="left:50.5px;top:47px;width:204px;height:23.5px;background:#ececec;border-radius:2px"></div>
 <svg class="ico" style="left:27px;top:50px" width="13" height="18" viewBox="0 0 13 18"><path d="M1.8 1.6L11 9L1.8 16.2Z" fill="#fafafa" stroke="#333" stroke-width="1.5" stroke-linejoin="round"/></svg>
 <svg class="ico" style="left:54px;top:53px" width="21" height="13" viewBox="0 0 21 13"><path d="M.8 6.4Q10.2-4.6 19.8 6.4Q10.2 17.4.8 6.4Z" fill="#a4a4a4"/><circle cx="10.3" cy="6.4" r="3.6" fill="#ececec"/><circle cx="10.3" cy="6.4" r="2" fill="#a4a4a4"/></svg>
 <div class="abs" style="left:81.2px;top:49.1px;width:142.1px;height:19.6px;background:#8c8c8c"></div>
 <svg class="ico" style="left:85.5px;top:49.5px" width="21" height="19" viewBox="0 0 21 19"><path d="M1 4.6L4.4 1H19.4L16 4.6ZM1 4.6H16V18H4Q1 18 1 15ZM16 4.6L19.4 1V14.4L16 18" fill="#f0f0f4" stroke="#4a4a4a" stroke-width="1.2" stroke-linejoin="round"/></svg>
 <div class="abs" style="left:123.3px;top:51px;font-size:14px;line-height:16px;font-weight:bold;color:#fff;white-space:nowrap;letter-spacing:.06px">(Sin guardar)</div>
 <svg class="ico" style="left:228px;top:50.8px" width="18" height="18" viewBox="0 0 18 18"><circle cx="8.8" cy="8.8" r="7.4" fill="#fff" stroke="#222" stroke-width="1.4"/><circle cx="8.8" cy="8.8" r="3.1" fill="#222"/></svg>
 <!-- comentarios -->
 <div class="abs" style="left:5px;top:750px;width:375px;height:31px;background:#f0f0f0;border:1px solid #c6c6c6"></div>
 <span class="abs" style="left:36.7px;top:758.2px;font-size:13px;line-height:15px;font-weight:400;color:#666;white-space:nowrap;-webkit-text-stroke:.3px #666;transform-origin:0 0;transform:scaleX(0.9455)">COMENTARIOS</span>
 <svg class="ico" style="left:353px;top:759.4px" width="13" height="13" viewBox="0 0 13 13"><circle cx="6.2" cy="6.2" r="5.8" fill="#1a1a1a"/><path d="M2.8 6.2H9.6M6.2 2.8V9.6" stroke="#fff" stroke-width="1.7"/></svg>
 <div class="abs" style="left:374px;top:759px;width:1.2px;height:13px;background:#777"></div><div class="abs" style="left:376.6px;top:761px;width:1px;height:9px;background:#aaa"></div>
 <!-- nav bar -->
 <div class="abs" style="left:562px;top:752.4px;width:296px;height:29px;background:#efefef;border-radius:3px"></div>
 <svg class="abs" style="left:560px;top:750px" width="300" height="34" viewBox="1060 889 300 34">
<!-- orbit -->
<path d="M1078.4 903.4Q1085.6 904.6 1084.4 907.6Q1082.6 910.6 1075.6 910.8M1072.4 903.4Q1065.8 904.8 1066.8 907.4" fill="none" stroke="#333" stroke-width="1.3"/>
<path d="M1073.9 915.6V901.4H1071.4L1075.4 896.2L1079.4 901.4H1076.9V915.6Z" fill="#fbfbfb" stroke="#333" stroke-width="1"/>
<path d="M1066.2 909.8L1071.4 906.4V913.2Z" fill="#111"/><path d="M1070 909.8H1076.6" stroke="#111" stroke-width="1.4"/>
<path d="M1091.6 903.8H1098.2L1094.9 907.8Z" fill="#333"/>
<!-- look at -->
<path d="M1108.5 903.2L1113.4 897.2V900.6L1122.4 897.6V903.2" fill="#c9c9cf" stroke="#444" stroke-width="1"/>
<rect x="1106.6" y="903.2" width="19.2" height="12" fill="#f4f4f4" stroke="#444" stroke-width="1.3"/>
<rect x="1110.6" y="906.6" width="11.2" height="5.4" fill="#9c9cb2" stroke="#333" stroke-width="1"/>
<!-- hand -->
<path d="M1144.6 909.4L1140 904.4Q1141.4 902.6 1143.4 904.2L1145.6 906.4L1144.2 899.2Q1145.6 897.4 1147 899.2L1148.4 904L1148.2 897.4Q1149.8 895.6 1151.2 897.4L1151.8 904L1152.8 898.4Q1154.6 897.2 1155.6 899L1155 905.2L1156.6 901.4Q1158.4 901 1158.4 903L1156.4 911Q1154.8 915.4 1150.4 915.4Q1146.6 915.2 1144.6 909.4Z" fill="#fbfbfb" stroke="#333" stroke-width="1.1" stroke-linejoin="round"/>
<path d="M1148.6 904.4V908M1151.8 904.2V908M1154.8 905.4V908.4" stroke="#666" stroke-width=".9"/>
<!-- zoom -->
<circle cx="1177.7" cy="904.6" r="5.8" fill="#e3ecf0" stroke="#444" stroke-width="1.5"/><path d="M1182 909L1187 913.4" stroke="#333" stroke-width="2.8" stroke-linecap="round"/>
<path d="M1185.4 899.4H1191.2M1188.3 896.6V902.2M1185.4 904.6H1191.2" stroke="#333" stroke-width="1.2"/>
<!-- zoom window -->
<rect x="1203.8" y="896.2" width="18.6" height="18.6" fill="none" stroke="#333" stroke-width="1.2" stroke-dasharray="3 2.2"/>
<circle cx="1211.6" cy="904.2" r="8" fill="#deeceb" stroke="#444" stroke-width="1.6"/><path d="M1217.4 910L1222 914.4" stroke="#333" stroke-width="3.2" stroke-linecap="round"/>
<path d="M1230.4 903.8H1237L1233.7 907.8Z" fill="#333"/>
<!-- display -->
<rect x="1245.6" y="896.6" width="18.8" height="14.6" rx="1" fill="#f4f4f4" stroke="#444" stroke-width="1.3"/><rect x="1248.4" y="899.4" width="13.2" height="9" fill="#9dbfea" stroke="#3d5d88" stroke-width="1"/>
<rect x="1250.6" y="912.2" width="9" height="3" fill="#f4f4f4" stroke="#555" stroke-width="1"/>
<path d="M1267.6 903.8H1274.2L1270.9 907.8Z" fill="#333"/>
<!-- grid -->
<rect x="1283.8" y="896.6" width="19" height="19" fill="#fafafa" stroke="#444" stroke-width="1.2"/>
<path d="M1287.6 896.6V915.6M1291.4 896.6V915.6M1295.2 896.6V915.6M1299 896.6V915.6M1283.8 900.4H1302.8M1283.8 904.2H1302.8M1283.8 908H1302.8M1283.8 911.8H1302.8" stroke="#555" stroke-width="1.4"/>
<path d="M1306.2 903.8H1312.8L1309.5 907.8Z" fill="#333"/>
<!-- viewports -->
<rect x="1322.2" y="897.4" width="18.6" height="16" rx="1" fill="#8eaedd" stroke="#3c5a92" stroke-width="1.3"/><path d="M1331.5 897.4V913.4M1322.2 905.4H1340.8" stroke="#34507f" stroke-width="1.5"/>
<path d="M1344.8 903.8H1351.4L1348.1 907.8Z" fill="#333"/>

 </svg>
 <!-- view cube -->
 <svg class="abs" style="left:1290px;top:20px" width="130" height="130" viewBox="1790 159 130 130">
<defs><radialGradient id="cs"><stop offset="0" stop-color="#000" stop-opacity=".16"/><stop offset="1" stop-color="#000" stop-opacity="0"/></radialGradient></defs><ellipse cx="1866" cy="248" rx="34" ry="16" fill="url(#cs)"/>
<path d="M1810.5 191.1L1849.5 174.1L1888.5 191.1L1849.5 212.4Z" fill="#ececec" fill-opacity=".92"/>
<path d="M1810.5 191.1L1849.5 212.4V256.4L1814 234.4Z" fill="#f1f1f1" fill-opacity=".92"/>
<path d="M1849.5 212.4L1888.5 191.1L1885 240.8L1849.5 256.4Z" fill="#e3e3e3" fill-opacity=".92"/>
<path d="M1810.5 191.1L1849.5 174.1L1888.5 191.1L1849.5 212.4ZM1849.5 212.4V256.4M1888.5 191.1L1885 240.8L1849.5 256.4" fill="none" stroke="#6e6e6e" stroke-width=".9"/>
<path d="M1809.1 184L1814 234.4" stroke="#7272dc" stroke-width="1.9"/>
<path d="M1814 234.4L1855.2 262.1" stroke="#ef9494" stroke-width="1.9"/>
<text x="1803" y="180.5" font-family="Liberation Sans,sans-serif" font-size="11.5" font-weight="bold" fill="#8484ee">Z</text>
<text x="1857.4" y="274" font-family="Liberation Sans,sans-serif" font-size="11.5" font-weight="bold" fill="#f29494">X</text>
<text transform="matrix(.88 .5 0 1 1816.5 220.5)" font-family="Liberation Sans,sans-serif" font-size="7.2" font-weight="bold" fill="#7c7c7c" letter-spacing=".2">FRONTAL</text>
<text transform="matrix(.88 -.5 0 1 1853.2 237.5)" font-family="Liberation Sans,sans-serif" font-size="7.2" font-weight="bold" fill="#7c7c7c" letter-spacing=".1">DERECHA</text>
<text transform="matrix(-.86 -.4 .8 -.42 1867.6 200.6)" font-family="Liberation Sans,sans-serif" font-size="7" font-weight="bold" fill="#868686" letter-spacing=".1">SUPERIOR</text>

 </svg>
</div>
<div id="timeline">
 <svg class="abs" style="left:0;top:0" width="1420" height="60" viewBox="500 927 1420 60">
  <g fill="#4e4e4e">
   <rect x="513.6" y="948.6" width="2.6" height="17.6"/><path d="M529.2 948.6V966.2L516.6 957.4Z"/>
   <path d="M556.6 949.4V965.4L545 957.4Z"/><rect x="557.8" y="953.6" width="2.4" height="7.6"/>
   <path d="M576.6 948V966.8L590.8 957.4Z"/>
   <rect x="606" y="953.6" width="2.4" height="7.6"/><path d="M609.6 949.4V965.4L621.2 957.4Z"/>
   <path d="M638.5 948.6V966.2L651.1 957.4Z"/><rect x="651.4" y="948.6" width="2.6" height="17.6"/>
   <path d="M670.4 939H684.8V942L679 947H676.2L670.4 942Z"/><rect x="676.4" y="945" width="2.2" height="33"/>
  </g>
  <g transform="translate(1893.4 957.2)"><path d="M9.85 -1.72L9.85 1.72L7.20 1.73L6.31 3.87L8.18 5.75L5.75 8.18L3.87 6.31L1.73 7.20L1.72 9.85L-1.72 9.85L-1.73 7.20L-3.87 6.31L-5.75 8.18L-8.18 5.75L-6.31 3.87L-7.20 1.73L-9.85 1.72L-9.85 -1.72L-7.20 -1.73L-6.31 -3.87L-8.18 -5.75L-5.75 -8.18L-3.87 -6.31L-1.73 -7.20L-1.72 -9.85L1.72 -9.85L1.73 -7.20L3.87 -6.31L5.75 -8.18L8.18 -5.75L6.31 -3.87L7.20 -1.73ZM3.60 0A3.60 3.60 0 1 0 -3.60 0A3.60 3.60 0 1 0 3.60 0Z" fill="#868686" fill-rule="evenodd"/></g>
 </svg>
</div>
</div>
<div id="black"></div>
</body>
</html>
